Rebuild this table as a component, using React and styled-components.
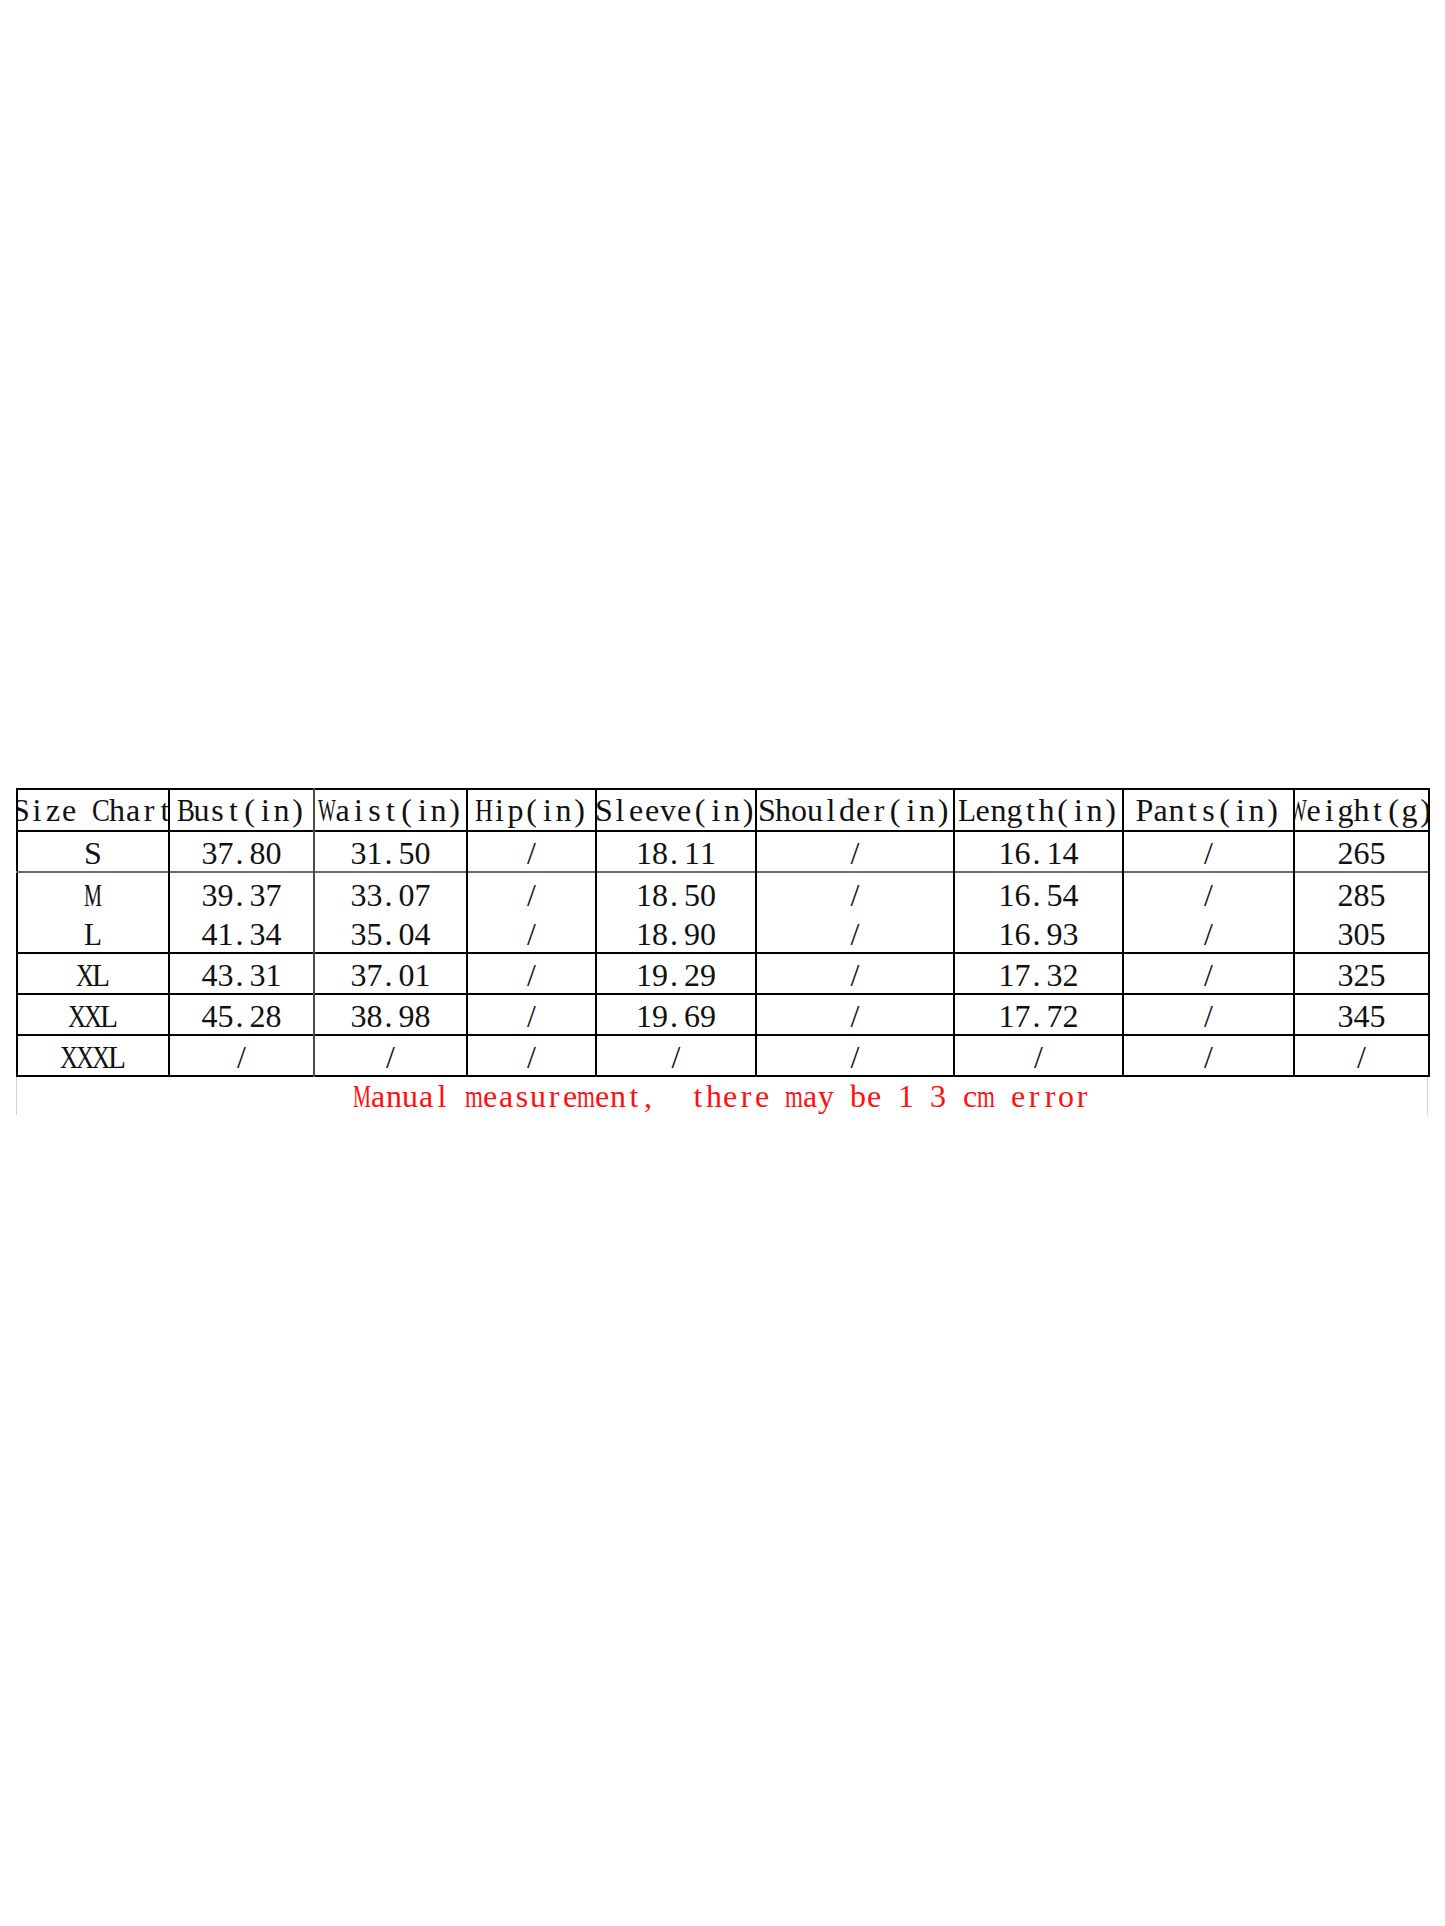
import React from "react";
import styled, { createGlobalStyle } from "styled-components";

const Global = createGlobalStyle`
  html, body { margin: 0; padding: 0; background: #ffffff; }
  body { width: 1445px; min-height: 1926px; }
`;

const Page = styled.div`
  width: 1445px;
  min-height: 1926px;
  box-sizing: border-box;
  padding: 788px 0 0 16px;
  background: #fff;
`;

const Sheet = styled.div`
  width: 1412px;
  display: flex;
  flex-direction: column;
`;

const Table = styled.table`
  width: 1412px;
  table-layout: fixed;
  border-collapse: collapse;
  border: 2px solid #000;
`;

const Row = styled.tr`
  height: ${(p) => p.$h}px;
  border-bottom: ${(p) => (p.$line === "none" ? "0" : p.$line === "gray" ? "2px solid #6a6a6a" : "2px solid #000")};
`;

const Cell = styled.td`
  padding: 0;
  border-right: 2px solid ${(p) => (p.$soft ? "#4a4a4a" : "#000")};
  vertical-align: middle;
`;

const Fit = styled.div`
  display: flex;
  justify-content: center;
  align-items: center;
  overflow: hidden;
  white-space: nowrap;
  height: 36px;
  padding-top: ${(p) => (p.$head ? 0 : 3)}px;
  color: #111;
`;

const Glyph = styled.span`
  display: inline-flex;
  justify-content: ${(p) => (p.$left ? "flex-start" : "center")};
  padding-left: ${(p) => (p.$left ? 2 : 0)}px;
  box-sizing: border-box;
  flex: 0 0 16px;
  width: 16px;
  font-family: "Liberation Serif", "Times New Roman", serif;
  font-size: 32px;
  line-height: 36px;
  white-space: pre;
  transform: scaleX(${(p) => p.$sx});
`;

const Note = styled.div`
  height: 38px;
  border-left: 1px solid #d4d4d4;
  border-right: 1px solid #d4d4d4;
  display: flex;
  justify-content: center;
  align-items: center;
  color: #ff1010;
`;

const WIDE = {
  M: 0.889, W: 0.944, m: 0.778, w: 0.722, C: 0.667, B: 0.667, H: 0.722,
  L: 0.611, X: 0.722, S: 0.556, P: 0.556, D: 0.722, A: 0.722, N: 0.722,
};

function Mono({ text }) {
  return Array.from(text).map((ch, i) => {
    const w = WIDE[ch] || 0.5;
    const sx = w > 0.56 ? +(0.56 / w).toFixed(2) : 1;
    return (
      <Glyph key={i} $sx={sx} $left={ch === "." || ch === ","}>
        {ch}
      </Glyph>
    );
  });
}

const widths = [152, 145, 153, 129, 160, 198, 169, 171, 135];
const heads = ["Size Chart", "Bust(in)", "Waist(in)", "Hip(in)", "Sleeve(in)", "Shoulder(in)", "Length(in)", "Pants(in)", "Weight(g)"];
const rows = [
  { cells: ["S", "37.80", "31.50", "/", "18.11", "/", "16.14", "/", "265"], h: 39, line: "gray" },
  { cells: ["M", "39.37", "33.07", "/", "18.50", "/", "16.54", "/", "285"], h: 41, line: "none" },
  { cells: ["L", "41.34", "35.04", "/", "18.90", "/", "16.93", "/", "305"], h: 40, line: "black" },
  { cells: ["XL", "43.31", "37.01", "/", "19.29", "/", "17.32", "/", "325"], h: 41, line: "black" },
  { cells: ["XXL", "45.28", "38.98", "/", "19.69", "/", "17.72", "/", "345"], h: 41, line: "black" },
  { cells: ["XXXL", "/", "/", "/", "/", "/", "/", "/", "/"], h: 41, line: "black" },
];

export default function App() {
  return (
    <Page>
      <Global />
      <Sheet>
        <Table>
          <colgroup>
            {widths.map((w, i) => (
              <col key={i} style={{ width: w }} />
            ))}
          </colgroup>
          <tbody>
            <Row $h={42} $line="black">
              {heads.map((t, i) => (
                <Cell key={i} $soft={i === 1}>
                  <Fit $head>
                    <Mono text={t} />
                  </Fit>
                </Cell>
              ))}
            </Row>
            {rows.map((r, ri) => (
              <Row key={ri} $h={r.h} $line={r.line}>
                {r.cells.map((c, ci) => (
                  <Cell key={ci} $soft={ci === 1}>
                    <Fit>
                      <Mono text={c} />
                    </Fit>
                  </Cell>
                ))}
              </Row>
            ))}
          </tbody>
        </Table>
        <Note>
          <Mono text={"Manual measurement,  there may be 1 3 cm error"} />
        </Note>
      </Sheet>
    </Page>
  );
}
